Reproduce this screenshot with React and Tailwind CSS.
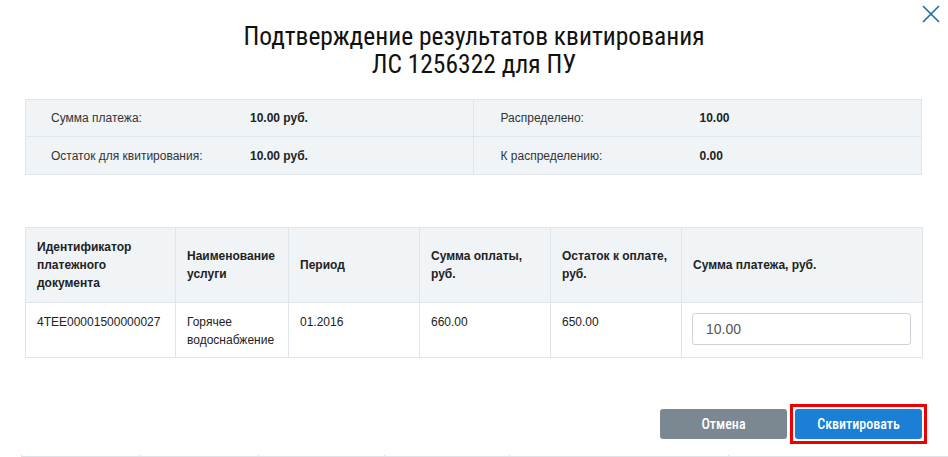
const info = [
  [['Сумма платежа:', '10.00 руб.'], ['Распределено:', '10.00']],
  [['Остаток для квитирования:', '10.00 руб.'], ['К распределению:', '0.00']],
];

const cols = [
  { title: 'Идентификатор платежного документа', w: 'w-[150px]' },
  { title: 'Наименование услуги', w: 'w-[113px]' },
  { title: 'Период', w: 'w-[131px]' },
  { title: 'Сумма оплаты, руб.', w: 'w-[131px]' },
  { title: 'Остаток к оплате, руб.', w: 'w-[131px]' },
  { title: 'Сумма платежа, руб.', w: 'w-[241px]' },
];

const narrow = { fontFamily: '"Roboto Condensed", "Liberation Sans Narrow", "DejaVu Sans Condensed", sans-serif' };

export default function App() {
  return (
    <div className="relative w-[948px] h-[457px] bg-white overflow-hidden text-[#222]" style={{ fontFamily: '"Liberation Sans", Arial, sans-serif' }}>
      <button className="absolute right-[8px] top-[5px] text-[#1a6aa8]" aria-label="close">
        <svg width="18" height="18" viewBox="0 0 18 18" fill="none" stroke="currentColor" strokeWidth="1.6">
          <path d="M1 1 L17 17 M17 1 L1 17" />
        </svg>
      </button>

      <h1 className="pt-[22px] text-center text-[25.5px] leading-[28px] text-[#111]" style={narrow}>
        Подтверждение результатов квитирования
        <br />
        ЛС 1256322 для ПУ
      </h1>

      <div className="mx-[25px] mt-[21px] w-[897px] border border-[#dfe5ea] bg-[#f0f4f7] text-[12px]">
        {info.map((row, i) => (
          <div key={i} className={`grid grid-cols-2 h-[37px] ${i === 0 ? 'border-b border-[#dfe5ea]' : ''}`}>
            {row.map(([label, value], j) => (
              <div key={j} className={`flex items-center ${j === 0 ? 'pl-[25px] border-r border-[#dfe5ea]' : 'pl-[27px]'}`}>
                <span className="w-[199px] text-[#333]">{label}</span>
                <span className="font-bold text-[#222]">{value}</span>
              </div>
            ))}
          </div>
        ))}
      </div>

      <table className="mx-[25px] mt-[52px] w-[897px] table-fixed border-collapse text-[12px] leading-[18px]">
        <thead>
          <tr className="h-[75px] bg-[#f0f4f7]">
            {cols.map((c) => (
              <th key={c.title} className={`${c.w} border border-[#dfe5ea] px-[11px] text-left align-middle font-bold text-[#222]`}>
                {c.title}
              </th>
            ))}
          </tr>
        </thead>
        <tbody>
          <tr className="h-[55px]">
            <td className="border border-[#dfe5ea] px-[11px] pt-[10px] align-top">4TEE00001500000027</td>
            <td className="border border-[#dfe5ea] px-[11px] pt-[10px] align-top">Горячее водоснабжение</td>
            <td className="border border-[#dfe5ea] px-[11px] pt-[10px] align-top">01.2016</td>
            <td className="border border-[#dfe5ea] px-[11px] pt-[10px] align-top">660.00</td>
            <td className="border border-[#dfe5ea] px-[11px] pt-[10px] align-top">650.00</td>
            <td className="border border-[#dfe5ea] px-[10px] py-[10px] align-top">
              <input
                readOnly
                value="10.00"
                className="block w-[219px] h-[32px] rounded-[3px] border border-[#cdd3d8] px-[13px] text-[14px] text-[#555] outline-none"
              />
            </td>
          </tr>
        </tbody>
      </table>

      <div className="mt-[46px] flex items-center justify-end gap-[3px] pr-[21px]">
        <button className="h-[30px] w-[127px] rounded-[3px] bg-[#7b8791] text-[14px] font-medium text-white" style={narrow}>
          Отмена
        </button>
        <div className="border-[3px] border-[#ee0000] px-[2px] py-[2px]">
          <button className="block h-[30px] w-[127px] rounded-[3px] bg-[#1b7fd6] text-[14px] font-medium text-white" style={narrow}>
            Сквитировать
          </button>
        </div>
      </div>

      <div className="absolute left-[21px] right-0 bottom-0 flex h-[2px] border-b border-[#dde3ea]">
        <div className="w-[119px] border-l border-[#d5dbe1]" />
        <div className="w-[118px] border-l border-[#d5dbe1]" />
        <div className="w-[126px] border-l border-[#d5dbe1]" />
        <div className="w-[125px] border-l border-[#d5dbe1]" />
        <div className="w-[219px] border-l border-[#d5dbe1]" />
        <div className="flex-1 border-l border-[#d5dbe1]" />
      </div>
    </div>
  );
}
